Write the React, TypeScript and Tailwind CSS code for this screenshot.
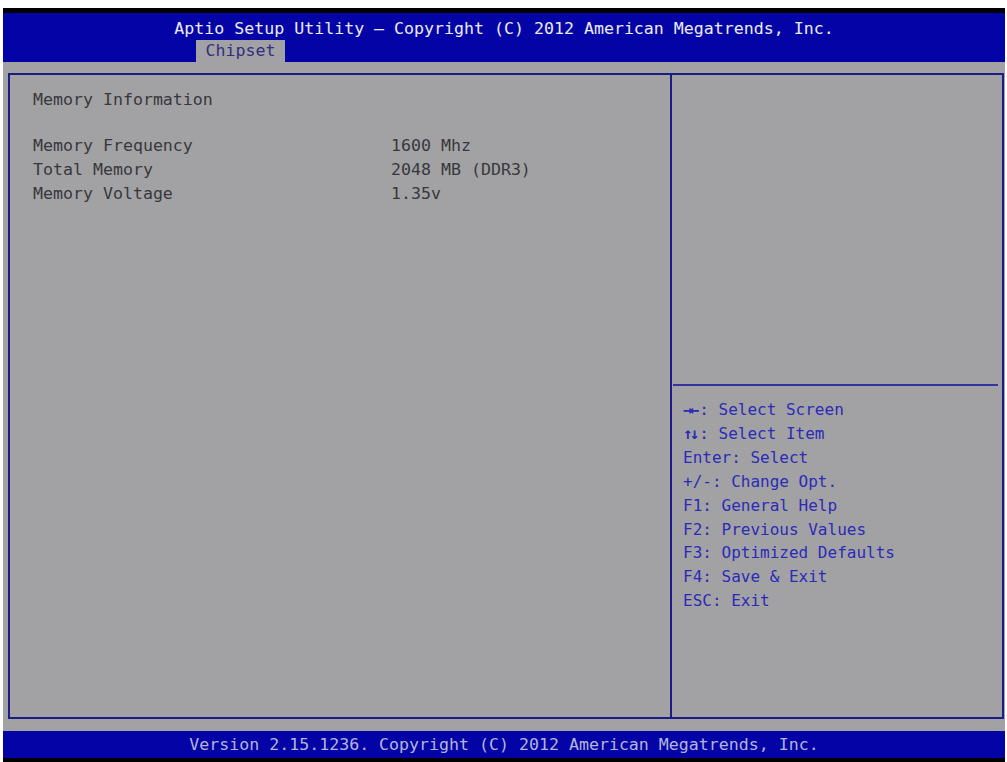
const mono = "font-['DejaVu_Sans_Mono','Liberation_Mono',monospace]";

const items = [
  { label: 'Memory Frequency', value: '1600 Mhz' },
  { label: 'Total Memory', value: '2048 MB (DDR3)' },
  { label: 'Memory Voltage', value: '1.35v' },
];

const help: [string, string][] = [
  ['→←', ': Select Screen'],
  ['↑↓', ': Select Item'],
  ['', 'Enter: Select'],
  ['', '+/-: Change Opt.'],
  ['', 'F1: General Help'],
  ['', 'F2: Previous Values'],
  ['', 'F3: Optimized Defaults'],
  ['', 'F4: Save & Exit'],
  ['', 'ESC: Exit'],
];

export default function App() {
  return (
    <div className={`flex h-[762px] w-[1007px] flex-col overflow-hidden bg-white pt-[8px] pl-[3px] pr-[2px] text-[16.6px] ${mono}`}>
      <div className="h-[5px] bg-black" />
      {/* header */}
      <div className="flex h-[49px] flex-col bg-[#0404a6]">
        <div className="pt-[5px] text-center leading-[22px] text-[#ecebf5]">
          Aptio Setup Utility – Copyright (C) 2012 American Megatrends, Inc.
        </div>
        <div className="mt-auto pl-[193px]">
          <div className="h-[22px] w-[89px] bg-[#a2a2a6] text-center leading-[22px] text-[#30307a]">Chipset</div>
        </div>
      </div>

      {/* main */}
      <div className="flex h-[669px] flex-col bg-[#a2a2a4] pt-[11px] pl-[5px] pr-[1px] pb-[12px]">
        <div className="flex flex-1 border-2 border-[#1c1c86]">
          <div className="w-[662px] border-r-2 border-[#1c1c86] pl-[23px] pt-[13px] leading-[24px] text-[#38383c]">
            <div>Memory Information</div>
            <div className="mt-[22px]">
              {items.map((it) => (
                <div key={it.label} className="flex">
                  <span className="w-[358px]">{it.label}</span>
                  <span>{it.value}</span>
                </div>
              ))}
            </div>
          </div>
          <div className="flex flex-1 flex-col">
            <div className="h-[309px]" />
            <div className="mr-[4px] ml-[1px] h-[2px] bg-[#3434a0]" />
            <div className="pl-[11px] pt-[12px] text-[16px] leading-[23.9px] text-[#2b2bb8]">
              {help.map(([arrows, text]) => (
                <div key={text}>
                  {arrows && <span className="pr-[3px] font-bold tracking-[-3px]">{arrows}</span>}
                  {text}
                </div>
              ))}
            </div>
          </div>
        </div>
      </div>

      {/* footer */}
      <div className="h-[27px] bg-[#0404a6] text-center leading-[27px] text-[#b4b4dc]">
        Version 2.15.1236. Copyright (C) 2012 American Megatrends, Inc.
      </div>
      <div className="flex-1 bg-black" />
    </div>
  );
}
